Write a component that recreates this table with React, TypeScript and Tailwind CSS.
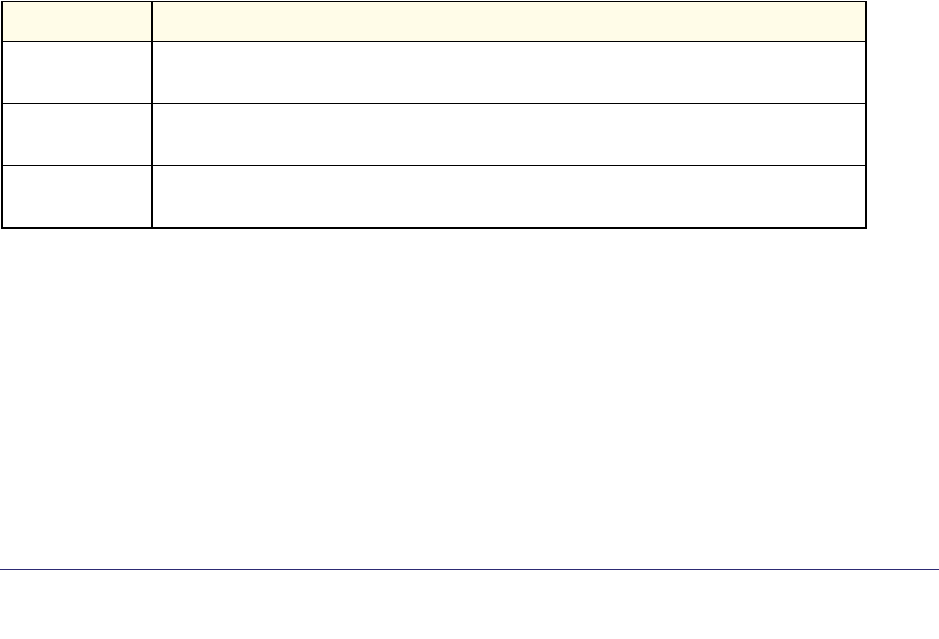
export default function App() {
  const rows = [0, 1, 2];
  return (
    <div className="w-[939px] h-[639px] bg-white overflow-hidden" style={{ fontFamily: '"Liberation Sans", Arial, sans-serif' }}>
      <div className="pl-px pt-px">
        <div className="w-[866px] border-t border-l-2 border-r-2 border-b-2 border-black">
          <div className="flex h-[40px] bg-[#fffce8] border-b border-black">
            <div className="w-[150px] border-r-2 border-black" />
            <div className="flex-1" />
          </div>
          {rows.map((r) => (
            <div key={r} className={r < 2 ? "flex h-[62px] border-b border-black" : "flex h-[61px]"}>
              <div className="w-[150px] border-r-2 border-black" />
              <div className="flex-1" />
            </div>
          ))}
        </div>
      </div>
      <div className="mt-[340px] h-px w-full bg-[#2d2b74]" />
    </div>
  );
}
